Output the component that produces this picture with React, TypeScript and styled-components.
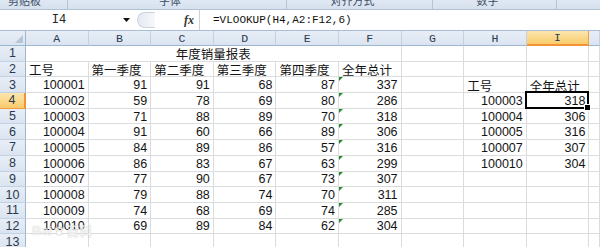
import React from 'react';
import styled, { createGlobalStyle, css } from 'styled-components';

const GlobalStyle = createGlobalStyle`
  html, body { margin: 0; padding: 0; background: #fff; overflow: hidden; }
  body { width: 600px; height: 247px; font-family: "Liberation Sans", "Noto Sans CJK SC", sans-serif; }
`;

const Page = styled.div`
  width: 600px;
  height: 247px;
  overflow: hidden;
  display: flex;
  flex-direction: column;
  background: #fff;
`;

const Ribbon = styled.div`
  height: 9px;
  flex: none;
  display: flex;
  overflow: hidden;
  background: linear-gradient(#dfe8f3, #d6e1ee);
  border-bottom: 1px solid #b0c1d6;
`;

const RibbonGroup = styled.div<{ $w: number; $shift?: number; $last?: boolean }>`
  width: ${(p) => p.$w}px;
  flex: none;
  box-sizing: border-box;
  display: flex;
  align-items: flex-end;
  justify-content: center;
  padding-right: ${(p) => p.$shift ?? 0}px;
  border-right: ${(p) => (p.$last ? 'none' : '1px solid #b4c5da')};
`;

const RibbonLabel = styled.span`
  font-family: "Noto Sans CJK SC", sans-serif;
  font-size: 11px;
  line-height: 12px;
  color: #3e4f66;
  margin-bottom: 3px;
  white-space: nowrap;
`;

const FormulaBar = styled.div`
  height: 20px;
  flex: none;
  display: flex;
  background: #fff;
  border-bottom: 1px solid #a9bcd3;
`;

const NameBox = styled.div`
  width: 118px;
  display: flex;
  align-items: center;
  justify-content: center;
  font-family: "Liberation Mono", monospace;
  font-size: 12px;
  color: #222;
`;

const DropArrow = styled.div`
  width: 16px;
  display: flex;
  align-items: center;
  justify-content: center;
`;

const ButtonArea = styled.div`
  width: 65px;
  display: flex;
  align-items: center;
  justify-content: space-between;
  padding: 0 3px 0 3px;
  box-sizing: border-box;
`;

const Pill = styled.div`
  width: 18px;
  height: 16px;
  box-sizing: border-box;
  border-radius: 9px 0 0 9px;
  border: 1px solid #c9d3df;
  border-right: none;
  background: linear-gradient(90deg, #e4eaf1, #f6f8fb);
`;

const Fx = styled.span`
  font-family: "Liberation Serif", serif;
  font-style: italic;
  font-weight: bold;
  font-size: 12px;
  color: #333;
  margin-right: 2px;
`;

const FormulaInput = styled.div`
  flex: 1;
  display: flex;
  align-items: center;
  padding-left: 13px;
  border-left: 1px solid #c6d1de;
  font-family: "Liberation Mono", monospace;
  font-size: 11px;
  color: #111;
`;

const Sheet = styled.div`
  flex: 1;
  position: relative;
  overflow: hidden;
  display: grid;
  grid-template-columns: 26px repeat(9, 62.6px) 1fr;
  grid-template-rows: 15px repeat(13, 15.7px);
`;

const headerBase = css`
  box-sizing: border-box;
  display: flex;
  align-items: center;
  justify-content: center;
  background: linear-gradient(#e8eef7, #dae4f0);
  color: #2b3a4e;
`;

const activeHeader = css`
  background: linear-gradient(#fce6ad, #f8cb6c);
  border-color: #f0a040;
`;

const Corner = styled.div`
  ${headerBase};
  position: relative;
  border-right: 1px solid #9eb6ce;
  border-bottom: 1px solid #9eb6ce;
  &::after {
    content: '';
    position: absolute;
    right: 2px;
    bottom: 2px;
    border-left: 8px solid transparent;
    border-bottom: 8px solid #b8c4d2;
  }
`;

const ColHeader = styled.div<{ $active?: boolean }>`
  ${headerBase};
  border-right: 1px solid #c3d1e2;
  border-bottom: 1px solid #9eb6ce;
  font-family: "Liberation Mono", monospace;
  font-size: 11.5px;
  ${(p) => p.$active && activeHeader};
  ${(p) => p.$active && css`border-bottom: 2px solid #f29436;`};
`;

const RowHeader = styled.div<{ $active?: boolean }>`
  ${headerBase};
  border-right: 1px solid #9eb6ce;
  border-bottom: 1px solid #c3d1e2;
  font-family: "Liberation Sans", sans-serif;
  font-size: 12.5px;
  ${(p) => p.$active && activeHeader};
  ${(p) => p.$active && css`border-right: 2px solid #f29436;`};
`;

const Cell = styled.div<{ $align?: 'left' | 'right' | 'center'; $span?: number; $flag?: boolean; $selected?: boolean }>`
  box-sizing: border-box;
  position: relative;
  display: flex;
  align-items: center;
  justify-content: ${(p) => (p.$align === 'right' ? 'flex-end' : p.$align === 'center' ? 'center' : 'flex-start')};
  padding: 1px 3px 0 3px;
  border-right: 1px solid #dadcdd;
  border-bottom: 1px solid #dadcdd;
  font-family: "Liberation Sans", "Noto Sans CJK SC", sans-serif;
  font-size: 12.5px;
  color: #141414;
  white-space: nowrap;
  ${(p) => p.$span && css`grid-column: span ${p.$span};`}
  ${(p) =>
    p.$flag &&
    css`
      &::before {
        content: '';
        position: absolute;
        left: 0;
        top: 0;
        border-top: 4px solid #1f8a2a;
        border-right: 4px solid transparent;
      }
    `}
  ${(p) =>
    p.$selected &&
    css`
      z-index: 2;
      &::after {
        content: '';
        position: absolute;
        left: -2px;
        top: -2px;
        right: -1px;
        bottom: -1px;
        border: 2px solid #000;
      }
    `}
`;

const FillHandle = styled.span`
  position: absolute;
  right: -3px;
  bottom: -3px;
  width: 5px;
  height: 5px;
  background: #000;
  border: 1px solid #fff;
  z-index: 3;
`;

const Watermark = styled.div`
  position: absolute;
  left: 32px;
  top: 190px;
  display: flex;
  align-items: center;
  gap: 1px;
  font-family: "Liberation Sans", "Noto Sans CJK SC", sans-serif;
  font-size: 13px;
  font-weight: bold;
  color: rgba(255, 255, 255, 0.75);
  text-shadow: 0 0 1px rgba(120, 120, 120, 0.45);
  pointer-events: none;
  z-index: 4;
`;

type Val = string | number | null;

const COLS = ['A', 'B', 'C', 'D', 'E', 'F', 'G', 'H', 'I'];

const data: [number, number, number, number, number, number][] = [
  [100001, 91, 91, 68, 87, 337],
  [100002, 59, 78, 69, 80, 286],
  [100003, 71, 88, 89, 70, 318],
  [100004, 91, 60, 66, 89, 306],
  [100005, 84, 89, 86, 57, 316],
  [100006, 86, 83, 67, 63, 299],
  [100007, 77, 90, 67, 73, 307],
  [100008, 79, 88, 74, 70, 311],
  [100009, 74, 68, 69, 74, 285],
  [100010, 69, 89, 84, 62, 304],
];

const lookup: Record<number, [Val, Val]> = {
  3: ['工号', '全年总计'],
  4: [100003, 318],
  5: [100004, 306],
  6: [100005, 316],
  7: [100007, 307],
  8: [100010, 304],
};

const header2 = ['工号', '第一季度', '第二季度', '第三季度', '第四季度', '全年总计'];

function renderValue(v: Val, key: string, opts: { flag?: boolean; selected?: boolean } = {}) {
  const isNum = typeof v === 'number';
  return (
    <Cell key={key} $align={isNum ? 'right' : 'left'} $flag={opts.flag} $selected={opts.selected}>
      {v}
      {opts.selected && <FillHandle />}
    </Cell>
  );
}

export default function App() {
  const rows: React.ReactNode[] = [];

  for (let r = 1; r <= 13; r++) {
    rows.push(
      <RowHeader key={`rh${r}`} $active={r === 4}>
        {r}
      </RowHeader>
    );
    if (r === 1) {
      rows.push(
        <Cell key="r1m" $span={6} $align="center">
          年度销量报表
        </Cell>
      );
      for (let c = 6; c < 9; c++) rows.push(<Cell key={`r1c${c}`} />);
    } else {
      const vals: Val[] = new Array(9).fill(null);
      if (r === 2) header2.forEach((h, i) => (vals[i] = h));
      if (r >= 3 && r <= 12) data[r - 3].forEach((v, i) => (vals[i] = v));
      if (lookup[r]) {
        vals[7] = lookup[r][0];
        vals[8] = lookup[r][1];
      }
      vals.forEach((v, c) =>
        rows.push(
          renderValue(v, `r${r}c${c}`, {
            flag: c === 5 && r >= 3 && r <= 12,
            selected: r === 4 && c === 8,
          })
        )
      );
    }
    rows.push(<Cell key={`r${r}j`} />);
  }

  return (
    <Page>
      <GlobalStyle />
      <Ribbon>
        <RibbonGroup $w={68} $shift={18}>
          <RibbonLabel>剪贴板</RibbonLabel>
        </RibbonGroup>
        <RibbonGroup $w={219} $shift={14}>
          <RibbonLabel>字体</RibbonLabel>
        </RibbonGroup>
        <RibbonGroup $w={146} $shift={14}>
          <RibbonLabel>对齐方式</RibbonLabel>
        </RibbonGroup>
        <RibbonGroup $w={124} $shift={14}>
          <RibbonLabel>数字</RibbonLabel>
        </RibbonGroup>
        <RibbonGroup $w={43} $last />
      </Ribbon>
      <FormulaBar>
        <NameBox>I4</NameBox>
        <DropArrow>
          <svg width="7" height="4" viewBox="0 0 7 4">
            <path d="M0 0 H7 L3.5 4 Z" fill="#111" />
          </svg>
        </DropArrow>
        <ButtonArea>
          <Pill />
          <Fx>fx</Fx>
        </ButtonArea>
        <FormulaInput>=VLOOKUP(H4,A2:F12,6)</FormulaInput>
      </FormulaBar>
      <Sheet>
        <Corner />
        {COLS.map((c) => (
          <ColHeader key={c} $active={c === 'I'}>
            {c}
          </ColHeader>
        ))}
        <ColHeader />
        {rows}
        <Watermark>
          <span>Bai</span>
          <svg width="12" height="12" viewBox="0 0 12 12">
            <g fill="rgba(255,255,255,0.8)" stroke="rgba(120,120,120,0.4)" strokeWidth="0.6">
              <circle cx="3" cy="4" r="1.4" />
              <circle cx="6" cy="2.6" r="1.4" />
              <circle cx="9" cy="4" r="1.4" />
              <ellipse cx="6" cy="8" rx="3" ry="2.4" />
            </g>
          </svg>
          <span>百科</span>
        </Watermark>
      </Sheet>
    </Page>
  );
}
